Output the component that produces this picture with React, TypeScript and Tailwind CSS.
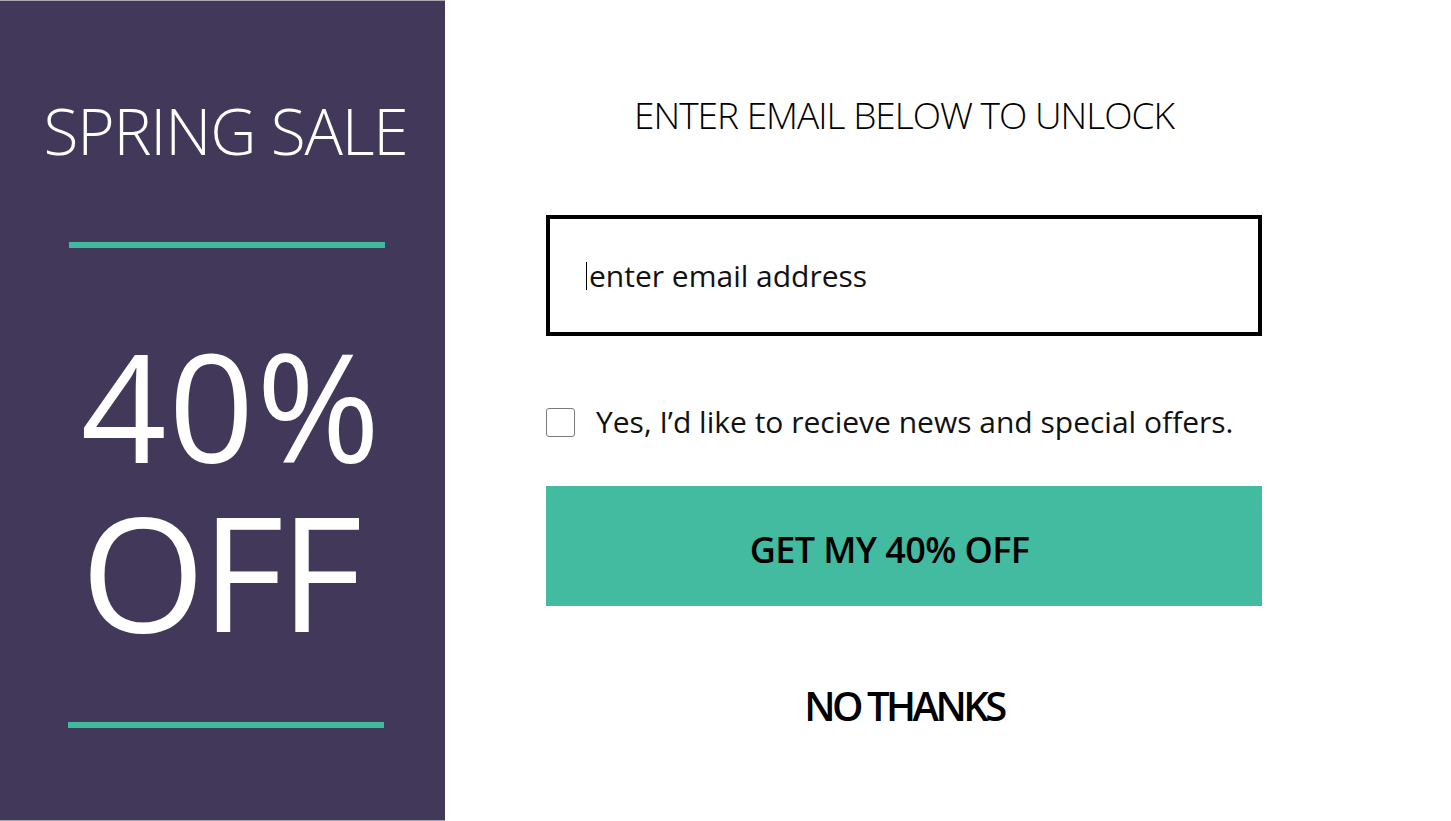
import React from "react";

export default function App() {
  return (
    <div
      className="flex w-[1451px] h-[821px] bg-white overflow-hidden"
      style={{ fontFamily: '"Open Sans", "Liberation Sans", sans-serif' }}
    >
      <div className="w-[445px] h-full shrink-0 bg-[#42395a] border-y border-[#a9a6ae] flex flex-col items-center text-white">
        <div className="mt-[90px] ml-[6px] text-[64px] leading-[80px] font-light tracking-[-1.2px]">SPRING SALE</div>
        <div className="mt-[71px] self-start ml-[69px] w-[316px] h-[6px] bg-[#3fb9a0]" />
        <div className="mt-[77px] ml-[18px] text-[150px] leading-[160px] font-normal tracking-[2px]">40%</div>
        <div className="ml-[-6px] text-[160px] leading-[170px] font-normal tracking-[-4px]">OFF</div>
        <div className="mt-[67px] self-start ml-[68px] w-[316px] h-[6px] bg-[#3fb9a0]" />
      </div>
      <div className="w-[716px] ml-[101px] flex flex-col items-center">
        <div className="mt-[90px] text-[37px] leading-[50px] font-light text-black tracking-[-1px]">
          ENTER EMAIL BELOW TO UNLOCK
        </div>
        <div className="mt-[75px] w-[716px] h-[121px] border-4 border-black flex items-center pl-[36px]">
          <span className="w-[1px] h-[28px] bg-black mr-[2px]" />
          <span className="text-[30px] leading-[42px] text-[#111] font-normal">enter email address</span>
        </div>
        <div className="mt-[65px] w-[716px] flex items-center">
          <div className="w-[29px] h-[29px] border border-[#7a7a7a] rounded-[3px]" />
          <span className="ml-[21px] text-[30px] leading-[42px] text-[#111] font-normal">
            Yes, I’d like to recieve news and special offers.
          </span>
        </div>
        <button className="mt-[43px] w-[716px] h-[120px] bg-[#43bba0] flex items-center justify-center pr-[29px] pt-[7px]">
          <span className="text-[36px] font-semibold text-black tracking-[-0.6px]">GET MY 40% OFF</span>
        </button>
        <div className="mt-[70px] text-[40px] font-semibold text-black tracking-[-3.5px]">NO THANKS</div>
      </div>
    </div>
  );
}
